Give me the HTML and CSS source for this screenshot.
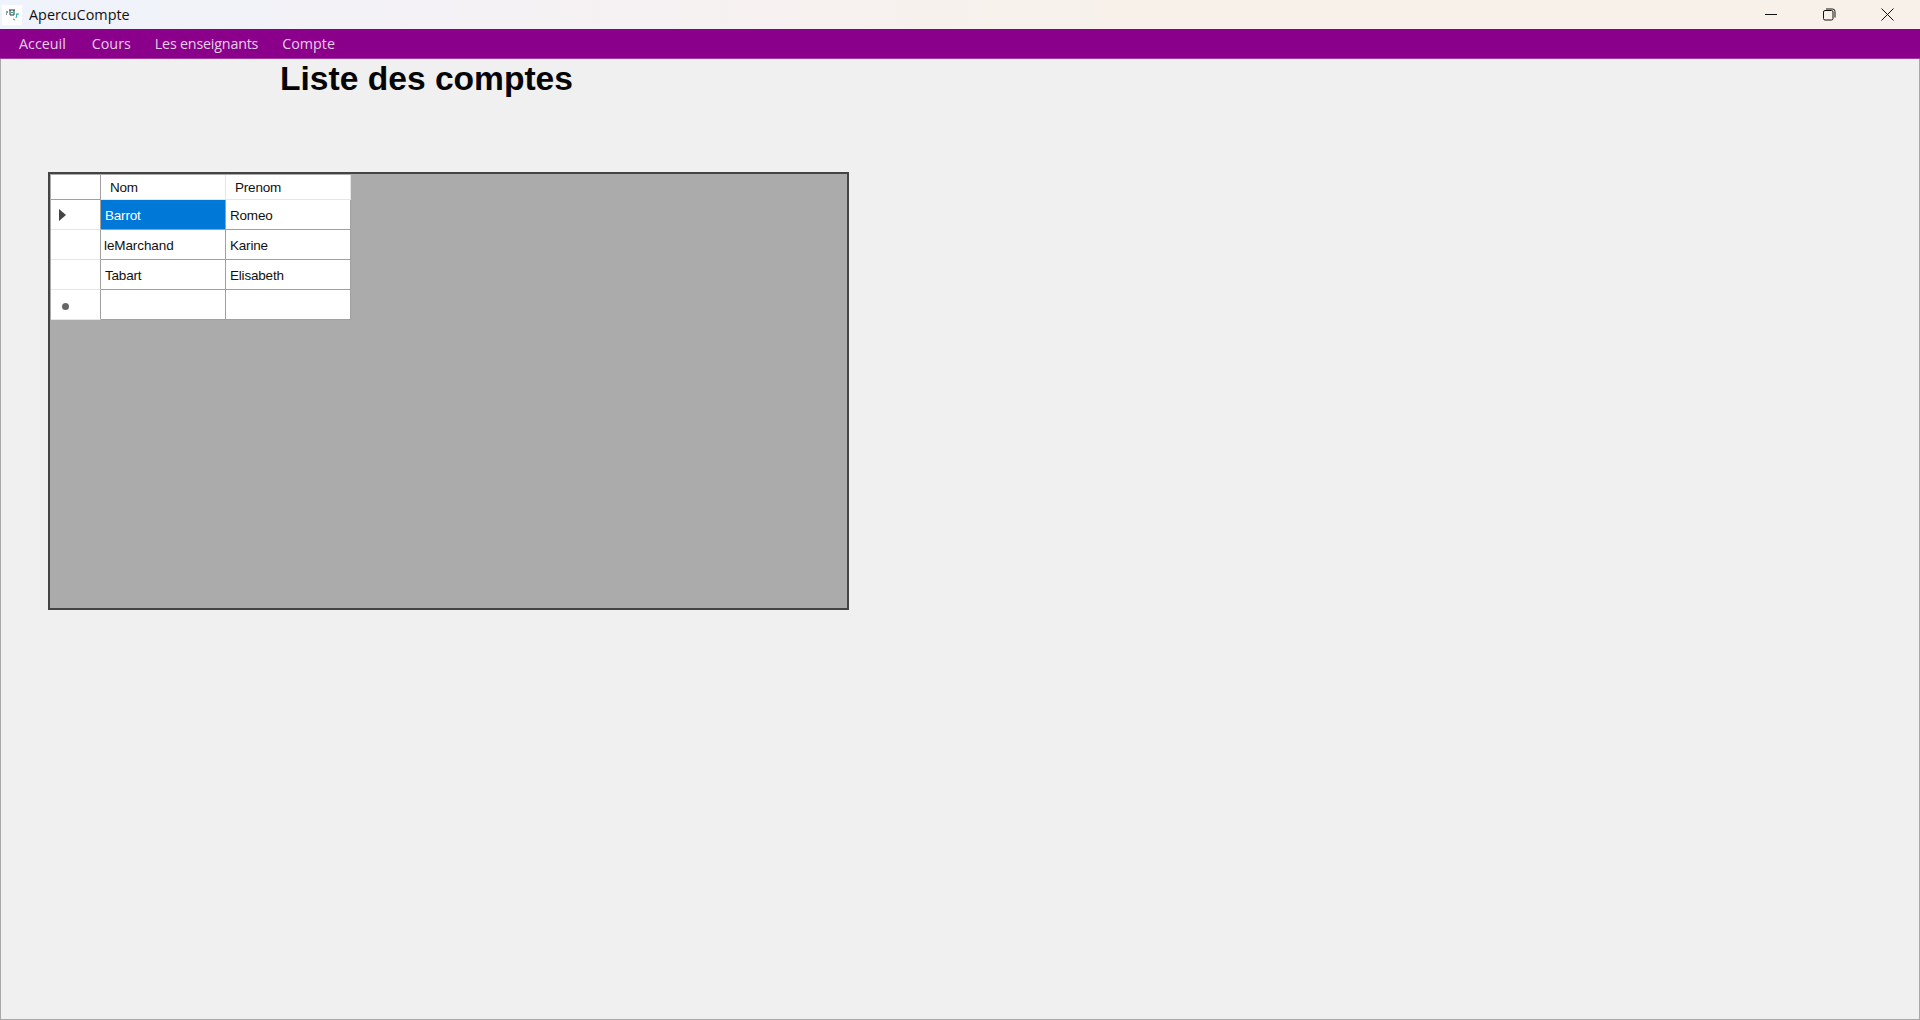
FILE: index.html
```html
<!DOCTYPE html>
<html lang="fr">
<head>
    <meta charset="UTF-8">
    <title>ApercuCompte</title>
    <link rel="stylesheet" href="styles.css">
</head>
<body>
    <!-- Title bar -->
    <header class="title-bar">
        <div class="app-icon">
            <svg width="20" height="20" viewBox="0 0 20 20" fill="none">
                <path d="M4 7h2M4 9h1M7 5h6M8 5v5h4V5" stroke="#1f3a3a" stroke-width="1"/>
                <path d="M9 7.5h2M14 9h3M15 9l-1 4M11 14l2 1" stroke="#14a890" stroke-width="1"/>
            </svg>
        </div>
        <span class="app-title">ApercuCompte</span>
        <div class="window-buttons">
            <button class="window-btn">
                <svg width="12" height="12" viewBox="0 0 12 12"><path d="M0 5.500h12" stroke="#111" stroke-width="1"/></svg>
            </button>
            <button class="window-btn">
                <svg width="13" height="13" viewBox="0 0 13 13" fill="none"><rect x="0.5" y="2.5" width="9.5" height="9.5" rx="1.5" stroke="#111"/><path d="M3 1h6.5A2.5 2.5 0 0 1 12 3.500V9.500" stroke="#111"/></svg>
            </button>
            <button class="window-btn">
                <svg width="13" height="13" viewBox="0 0 13 13"><path d="M0.500 0.500l12 12M12.500 0.500l-12 12" stroke="#111" stroke-width="1"/></svg>
            </button>
        </div>
    </header>

    <!-- Menu -->
    <nav class="menu-bar">
        <a class="menu-item first">Acceuil</a>
        <a class="menu-item">Cours</a>
        <a class="menu-item narrow">Les enseignants</a>
        <a class="menu-item">Compte</a>
    </nav>

    <main class="content">
        <h1 class="page-title">Liste des comptes</h1>

        <div class="grid-view">
            <table class="accounts">
                <thead>
                    <tr>
                        <th class="row-head"></th>
                        <th class="col-name">Nom</th>
                        <th class="col-first">Prenom</th>
                    </tr>
                </thead>
                <tbody>
                    <tr>
                        <td class="row-head"><span class="row-arrow"></span></td>
                        <td class="selected">Barrot</td>
                        <td>Romeo</td>
                    </tr>
                    <tr>
                        <td class="row-head"></td>
                        <td class="tight">leMarchand</td>
                        <td>Karine</td>
                    </tr>
                    <tr>
                        <td class="row-head"></td>
                        <td>Tabart</td>
                        <td>Elisabeth</td>
                    </tr>
                    <tr>
                        <td class="row-head"><span class="row-star"></span></td>
                        <td></td>
                        <td></td>
                    </tr>
                </tbody>
            </table>
        </div>
    </main>
</body>
</html>
```

FILE: styles.css
```css
* {
    margin: 0;
    padding: 0;
    box-sizing: border-box;
}

body {
    width: 1920px;
    height: 1020px;
    display: flex;
    flex-direction: column;
    overflow: hidden;
    background: #f0f0f0;
    color: #000;
    font-family: 'Open Sans', 'Noto Sans', sans-serif;
}

.title-bar {
    height: 29px;
    display: flex;
    align-items: center;
    background: linear-gradient(90deg, #eff3fb 0%, #f6f1f2 35%, #f8f1ea 60%, #f8f1ea 100%);
}

.app-icon {
    width: 20px;
    height: 20px;
    margin: 0 7px 0 2px;
    background: #fff;
}

.app-title {
    font-size: 14.4px;
    color: #111;
}

.window-buttons {
    margin-left: auto;
    padding-right: 3px;
    display: flex;
}

.window-btn {
    width: 58.500px;
    height: 29px;
    display: flex;
    align-items: center;
    justify-content: center;
    background: none;
    border: none;
}

.menu-bar {
    height: 30px;
    display: flex;
    align-items: center;
    gap: 24px;
    padding-left: 19px;
    background: #8b008b;
    border-bottom: 1px solid #a33aa3;
}

.menu-item {
    font-size: 14.3px;
    color: #e6cce6;
}

.menu-item.first {
    margin-right: 2px;
}

.menu-item.narrow {
    letter-spacing: -0.2px;
}

.content {
    flex: 1;
    padding: 0 0 0 47px;
    border: 1px solid #a8a8a8;
    border-top: none;
}

.page-title {
    margin-left: 232px;
    padding-top: 1px;
    font-family: 'Liberation Sans', sans-serif;
    font-size: 33.600px;
    font-weight: 700;
    line-height: 38px;
    height: 113px;
    color: #050505;
}

.grid-view {
    width: 801px;
    height: 438px;
    padding: 1px;
    background: #ababab;
    border: 2px solid #444;
}

.accounts {
    border-collapse: separate;
    border-spacing: 0;
    table-layout: fixed;
    width: 300px;
    font-family: 'Liberation Sans', sans-serif;
    font-size: 13.500px;
    letter-spacing: -0.2px;
    color: #111;
}

.accounts th {
    height: 25px;
    padding-left: 9px;
    text-align: left;
    font-weight: 400;
    background: #fff;
    border-right: 1px solid #e6e6e6;
    border-bottom: 1px solid #e6e6e6;
}

.accounts td {
    height: 30px;
    padding-top: 1px;
    padding-left: 4px;
    background: #fff;
    border-right: 1px solid #a0a0a0;
    border-bottom: 1px solid #a0a0a0;
}

.accounts .row-head {
    width: 50px;
    padding-left: 0;
    background: #fff;
    border-right: 1px solid #a0a0a0;
    border-bottom: 1px solid #e6e6e6;
}

.accounts th.row-head {
    border-bottom: 1px solid #a0a0a0;
}

.col-name {
    width: 125px;
}

.col-first {
    width: 125px;
}

.accounts .selected {
    background: #0078d7;
    color: #fff;
}

.accounts .tight {
    padding-left: 3px;
    letter-spacing: -0.1px;
}

.row-arrow {
    display: block;
    width: 0;
    height: 0;
    margin-left: 8px;
    border-left: 7px solid #444;
    border-top: 6px solid transparent;
    border-bottom: 6px solid transparent;
}

.row-star {
    display: block;
    width: 7px;
    height: 7px;
    margin: 3px 0 0 11px;
    border-radius: 50%;
    background: #666;
}
```
